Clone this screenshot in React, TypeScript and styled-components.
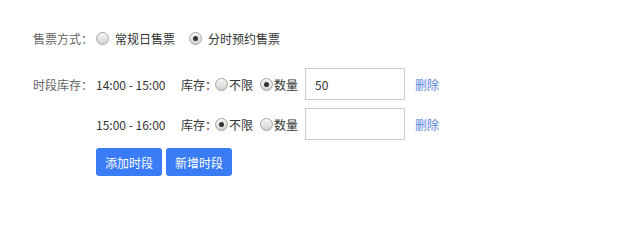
import styled, { createGlobalStyle } from 'styled-components';

const GlobalStyle = createGlobalStyle`
  html, body {
    margin: 0;
    padding: 0;
    background: #fff;
  }
  body {
    font-family: "Microsoft YaHei", "Noto Sans CJK SC", "Noto Sans", sans-serif;
    font-size: 12px;
    color: #333;
  }
`;

const Form = styled.div`
  display: flex;
  flex-direction: column;
  padding: 24px 0 0 33px;
`;

const Row = styled.div`
  display: flex;
  align-items: center;
  height: ${(p: { h?: number }) => p.h ?? 32}px;
  margin-bottom: ${(p: { gap?: number }) => p.gap ?? 8}px;
`;

const Label = styled.div`
  width: 63px;
  color: #666;
  white-space: nowrap;
`;

const Spacer = styled.div`
  width: 63px;
`;

const Time = styled.div`
  width: 85px;
  white-space: nowrap;
`;

const StockLabel = styled.div`
  width: 34px;
  white-space: nowrap;
`;

const Option = styled.label`
  display: flex;
  align-items: center;
  gap: ${(p: { spaced?: boolean }) => (p.spaced ? 6 : 1)}px;
  margin-right: ${(p: { spaced?: boolean }) => (p.spaced ? 14 : 7)}px;
  white-space: nowrap;
`;

const Dot = styled.span<{ checked?: boolean }>`
  position: relative;
  width: 13px;
  height: 13px;
  border-radius: 50%;
  box-sizing: border-box;
  border: 1px solid #a4a4a4;
  background: linear-gradient(#f6f6f6, #d2d2d2);
  &::after {
    content: '';
    display: ${(p) => (p.checked ? 'block' : 'none')};
    position: absolute;
    left: 3px;
    top: 3px;
    width: 5px;
    height: 5px;
    border-radius: 50%;
    background: #333;
  }
`;

const Input = styled.input`
  width: 100px;
  height: 32px;
  box-sizing: border-box;
  border: 1px solid #ccc;
  padding: 0 9px;
  font: inherit;
  color: #333;
  outline: none;
  margin-left: 0;
`;

const Link = styled.a`
  color: #5a82dc;
  margin-left: 10px;
  cursor: pointer;
  white-space: nowrap;
`;

const Button = styled.button`
  height: 28px;
  padding: 0 9px;
  margin-right: 4px;
  border: none;
  border-radius: 3px;
  background: #3a7bf6;
  color: #fff;
  font: inherit;
  font-size: 12px;
  cursor: pointer;
`;

type Slot = { time: string; unlimited: boolean; value: string };

const slots: Slot[] = [
  { time: '14:00 - 15:00', unlimited: false, value: '50' },
  { time: '15:00 - 16:00', unlimited: true, value: '' },
];

export default function App() {
  return (
    <>
      <GlobalStyle />
      <Form>
        <Row h={28} gap={16}>
          <Label>售票方式：</Label>
          <Option spaced>
            <Dot />
            常规日售票
          </Option>
          <Option spaced>
            <Dot checked />
            分时预约售票
          </Option>
        </Row>
        {slots.map((s, i) => (
          <Row key={s.time}>
            {i === 0 ? <Label>时段库存：</Label> : <Spacer />}
            <Time>{s.time}</Time>
            <StockLabel>库存：</StockLabel>
            <Option>
              <Dot checked={s.unlimited} />
              不限
            </Option>
            <Option>
              <Dot checked={!s.unlimited} />
              数量
            </Option>
            <Input defaultValue={s.value} />
            <Link>删除</Link>
          </Row>
        ))}
        <Row h={28}>
          <Spacer />
          <Button>添加时段</Button>
          <Button>新增时段</Button>
        </Row>
      </Form>
    </>
  );
}
